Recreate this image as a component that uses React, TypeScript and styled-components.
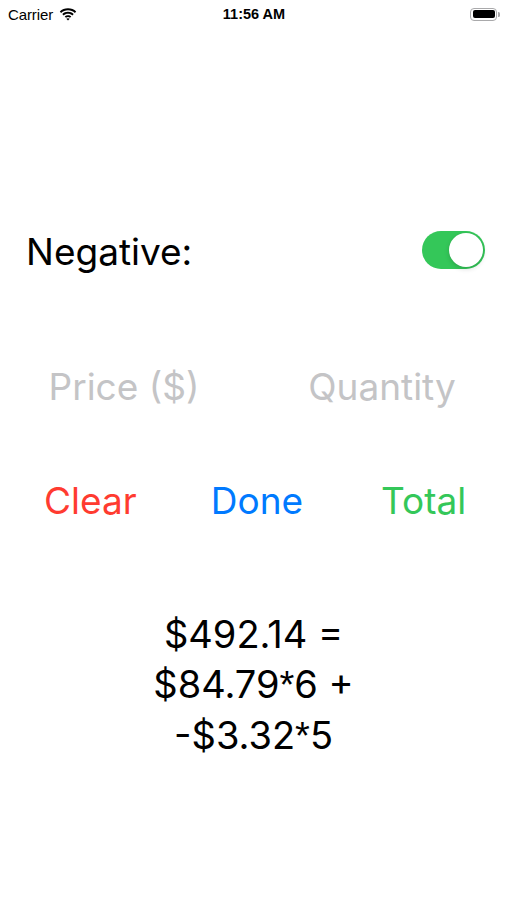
import React, { useState } from "react";
import styled, { createGlobalStyle } from "styled-components";

const GlobalStyle = createGlobalStyle`
  html, body { margin: 0; padding: 0; background: #ffffff; }
  body { font-family: "Liberation Sans", Arial, sans-serif; -webkit-font-smoothing: antialiased; }
  * { box-sizing: border-box; }
`;

const Screen = styled.div`
  width: 507px;
  height: 900px;
  background: #ffffff;
  display: flex;
  flex-direction: column;
  overflow: hidden;
`;

const StatusBar = styled.div`
  height: 28px;
  display: grid;
  grid-template-columns: 1fr auto 1fr;
  align-items: center;
  padding: 0 7px 0 8px;
  color: #000;
`;

const StatusLeft = styled.div`
  display: flex;
  align-items: center;
  gap: 6px;
  font-size: 15px;
  letter-spacing: -0.1px;
`;

const StatusTime = styled.div`
  font-size: 14.5px;
  font-weight: 700;
`;

const StatusRight = styled.div`
  display: flex;
  justify-content: flex-end;
  align-items: center;
`;

const BatteryBody = styled.div`
  width: 27px;
  height: 13px;
  border: 1px solid #a9a9ab;
  border-radius: 4px;
  padding: 1.5px;
  display: flex;
`;

const BatteryFill = styled.div`
  flex: 1;
  background: #000;
  border-radius: 2px;
`;

const BatteryCap = styled.div`
  width: 2px;
  height: 5px;
  margin-left: 1px;
  background: #a9a9ab;
  border-radius: 0 1.5px 1.5px 0;
`;

const Content = styled.div`
  display: flex;
  flex-direction: column;
  font-family: Inter, "Liberation Sans", Arial, sans-serif;
  font-size: 37px;
  line-height: 46px;
`;

const NegativeRow = styled.div`
  margin-top: 201px;
  display: flex;
  align-items: center;
  justify-content: space-between;
  padding: 0 22px 0 26px;
`;

const Label = styled.span`
  color: #000;
`;

const SwitchTrack = styled.button<{ $on: boolean }>`
  width: 63px;
  height: 38px;
  margin-bottom: 4px;
  border: none;
  border-radius: 19px;
  padding: 2px;
  background: ${(p) => (p.$on ? "#34c759" : "#e9e9eb")};
  display: flex;
  justify-content: ${(p) => (p.$on ? "flex-end" : "flex-start")};
  cursor: pointer;
`;

const SwitchKnob = styled.span`
  width: 34px;
  height: 34px;
  border-radius: 50%;
  background: #fff;
  box-shadow: 0 2px 5px rgba(0, 0, 0, 0.15), 0 0 1px rgba(0, 0, 0, 0.1);
`;

const FieldRow = styled.div`
  margin-top: 89px;
  display: grid;
  grid-template-columns: 196px 196px;
  column-gap: 62px;
  padding-left: 26px;
`;

const Field = styled.input`
  width: 100%;
  border: none;
  outline: none;
  background: transparent;
  font: inherit;
  line-height: 46px;
  height: 46px;
  padding: 0;
  text-align: center;
  color: #000;
  &::placeholder { color: #c4c4c6; }
`;

const ButtonRow = styled.div`
  margin-top: 68px;
  display: grid;
  grid-template-columns: repeat(3, 1fr);
  padding: 0 0 0 7px;
`;

const TextButton = styled.button<{ $color: string }>`
  border: none;
  background: transparent;
  font: inherit;
  line-height: 46px;
  padding: 0;
  color: ${(p) => p.$color};
  text-align: center;
  cursor: pointer;
`;

const Result = styled.div`
  margin-top: 85px;
  text-align: center;
  font-size: 38px;
  line-height: 50px;
  color: #000;
`;

const Asterisk = styled.span`
  font-family: "Liberation Sans", Arial, sans-serif;
  font-size: 38px;
`;

const Wifi = () => (
  <svg width="18" height="13" viewBox="0 0 18 13" aria-hidden>
    <path d="M9 2.2c2.7 0 5.1 1 6.9 2.7l1.3-1.4C15.1 1.5 12.2.3 9 .3S2.9 1.5.8 3.5l1.3 1.4C3.9 3.2 6.3 2.2 9 2.2z" fill="#000" />
    <path d="M9 5.7c1.7 0 3.2.6 4.4 1.7l1.3-1.4C13.2 4.6 11.2 3.8 9 3.8S4.8 4.6 3.3 6l1.3 1.4C5.8 6.3 7.3 5.7 9 5.7z" fill="#000" />
    <path d="M9 9.1c.8 0 1.4.3 2 .7l1.3-1.4C11.4 7.7 10.3 7.2 9 7.2s-2.4.5-3.3 1.2L7 9.8c.6-.4 1.2-.7 2-.7z" fill="#000" />
    <path d="M9 12.6l1.7-1.8c-.5-.3-1.1-.5-1.7-.5s-1.2.2-1.7.5z" fill="#000" />
  </svg>
);

export default function App() {
  const [negative, setNegative] = useState(true);
  return (
    <>
      <GlobalStyle />
      <Screen>
        <StatusBar>
          <StatusLeft>
            <span>Carrier</span>
            <Wifi />
          </StatusLeft>
          <StatusTime>11:56 AM</StatusTime>
          <StatusRight>
            <BatteryBody>
              <BatteryFill />
            </BatteryBody>
            <BatteryCap />
          </StatusRight>
        </StatusBar>
        <Content>
          <NegativeRow>
            <Label>Negative:</Label>
            <SwitchTrack $on={negative} onClick={() => setNegative(!negative)} aria-label="Negative">
              <SwitchKnob />
            </SwitchTrack>
          </NegativeRow>
          <FieldRow>
            <Field placeholder="Price ($)" />
            <Field placeholder="Quantity" />
          </FieldRow>
          <ButtonRow>
            <TextButton $color="#ff3b30">Clear</TextButton>
            <TextButton $color="#007aff">Done</TextButton>
            <TextButton $color="#34c759">Total</TextButton>
          </ButtonRow>
          <Result>
            $492.14 =<br />
            $84.79<Asterisk>*</Asterisk>6 +<br />
            -$3.32<Asterisk>*</Asterisk>5
          </Result>
        </Content>
      </Screen>
    </>
  );
}
